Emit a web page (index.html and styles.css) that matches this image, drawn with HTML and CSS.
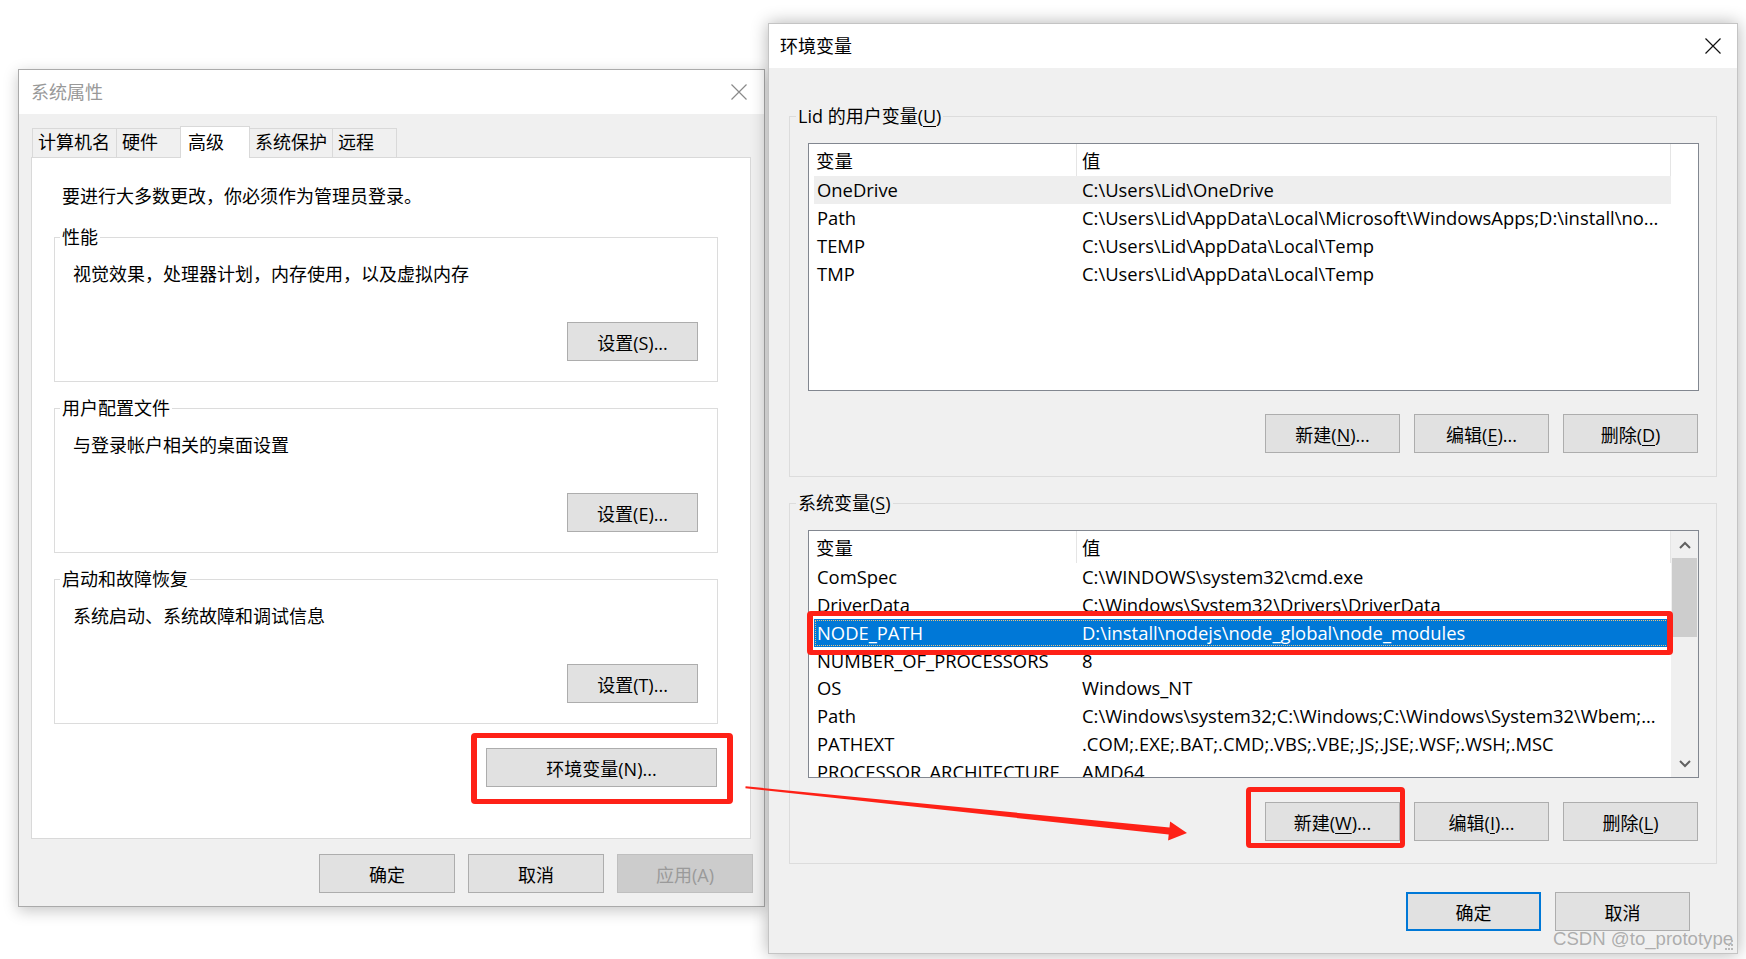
FILE: index.html
```html
<!DOCTYPE html>
<html lang="zh-CN">
  <head>
    <meta charset="UTF-8" />
    <title>系统属性 - 环境变量</title>
    <link rel="stylesheet" href="styles.css">
  </head>
  <body>
    <div class="desktop">

      <!-- Window: 系统属性 -->
      <div class="win win-sys">
        <div class="titlebar">
          <span class="title">系统属性</span>
          <svg class="close" viewBox="0 0 16 16"><path d="M0.5 0.5L15.5 15.5M15.5 0.5L0.5 15.5" stroke="#8a8a8a" stroke-width="1.2" fill="none"/></svg>
        </div>

        <div class="tabs">
          <div class="tab t1">计算机名</div>
          <div class="tab t2">硬件</div>
          <div class="tab t3 active">高级</div>
          <div class="tab t4">系统保护</div>
          <div class="tab t5">远程</div>
        </div>

        <div class="panel">
          <p class="intro">要进行大多数更改，你必须作为管理员登录。</p>

          <fieldset class="group">
            <legend>性能</legend>
            <p class="desc">视觉效果，处理器计划，内存使用，以及虚拟内存</p>
            <div class="group-actions"><button class="btn btn-set">设置(S)...</button></div>
          </fieldset>

          <fieldset class="group">
            <legend>用户配置文件</legend>
            <p class="desc">与登录帐户相关的桌面设置</p>
            <div class="group-actions"><button class="btn btn-set">设置(E)...</button></div>
          </fieldset>

          <fieldset class="group">
            <legend>启动和故障恢复</legend>
            <p class="desc">系统启动、系统故障和调试信息</p>
            <div class="group-actions"><button class="btn btn-set">设置(T)...</button></div>
          </fieldset>

          <div class="env-row"><button class="btn btn-env">环境变量(N)...</button></div>
        </div>

        <div class="dlg-buttons">
          <button class="btn">确定</button>
          <button class="btn">取消</button>
          <button class="btn" disabled>应用(A)</button>
        </div>
      </div>

      <!-- Window: 环境变量 -->
      <div class="win win-env">
        <div class="titlebar">
          <span class="title">环境变量</span>
          <svg class="close" viewBox="0 0 16 16"><path d="M0.5 0.5L15.5 15.5M15.5 0.5L0.5 15.5" stroke="#111" stroke-width="1.2" fill="none"/></svg>
        </div>

        <fieldset class="env-group">
          <legend>Lid 的用户变量(<u>U</u>)</legend>
          <div class="list">
            <div class="list-main">
              <div class="lv-head"><span class="h-name">变量</span><span class="h-val">值</span></div>
              <div class="lv-row hover"><span class="c-name">OneDrive</span><span class="c-val">C:\Users\Lid\OneDrive</span></div>
              <div class="lv-row"><span class="c-name">Path</span><span class="c-val">C:\Users\Lid\AppData\Local\Microsoft\WindowsApps;D:\install\no...</span></div>
              <div class="lv-row"><span class="c-name">TEMP</span><span class="c-val">C:\Users\Lid\AppData\Local\Temp</span></div>
              <div class="lv-row"><span class="c-name">TMP</span><span class="c-val">C:\Users\Lid\AppData\Local\Temp</span></div>
            </div>
            <div class="list-side"></div>
          </div>
          <div class="row-buttons">
            <button class="btn btn-sm">新建(<u>N</u>)...</button>
            <button class="btn btn-sm">编辑(<u>E</u>)...</button>
            <button class="btn btn-sm">删除(<u>D</u>)</button>
          </div>
        </fieldset>

        <fieldset class="env-group">
          <legend>系统变量(<u>S</u>)</legend>
          <div class="list">
            <div class="list-main">
              <div class="lv-head"><span class="h-name">变量</span><span class="h-val">值</span></div>
              <div class="lv-row"><span class="c-name">ComSpec</span><span class="c-val">C:\WINDOWS\system32\cmd.exe</span></div>
              <div class="lv-row"><span class="c-name">DriverData</span><span class="c-val">C:\Windows\System32\Drivers\DriverData</span></div>
              <div class="lv-row sel"><span class="c-name">NODE_PATH</span><span class="c-val">D:\install\nodejs\node_global\node_modules</span></div>
              <div class="lv-row"><span class="c-name">NUMBER_OF_PROCESSORS</span><span class="c-val">8</span></div>
              <div class="lv-row"><span class="c-name">OS</span><span class="c-val">Windows_NT</span></div>
              <div class="lv-row"><span class="c-name">Path</span><span class="c-val">C:\Windows\system32;C:\Windows;C:\Windows\System32\Wbem;...</span></div>
              <div class="lv-row"><span class="c-name">PATHEXT</span><span class="c-val">.COM;.EXE;.BAT;.CMD;.VBS;.VBE;.JS;.JSE;.WSF;.WSH;.MSC</span></div>
              <div class="lv-row"><span class="c-name">PROCESSOR_ARCHITECTURE</span><span class="c-val">AMD64</span></div>
            </div>
            <div class="list-side scrollbar">
              <div class="sb-btn"><svg viewBox="0 0 12 8"><polyline points="1,7 6,2 11,7" fill="none" stroke="#606060" stroke-width="2"/></svg></div>
              <div class="sb-thumb"></div>
              <div class="sb-track"></div>
              <div class="sb-btn sb-down"><svg viewBox="0 0 12 8"><polyline points="1,1 6,6 11,1" fill="none" stroke="#606060" stroke-width="2"/></svg></div>
            </div>
          </div>
          <div class="row-buttons">
            <button class="btn btn-sm">新建(<u>W</u>)...</button>
            <button class="btn btn-sm">编辑(<u>I</u>)...</button>
            <button class="btn btn-sm">删除(<u>L</u>)</button>
          </div>
        </fieldset>

        <div class="ok-row">
          <button class="btn btn-sm btn-default">确定</button>
          <button class="btn btn-sm">取消</button>
        </div>
      </div>

      <!-- annotations drawn on top of the screenshot -->
      <div class="mark mark-env"></div>
      <div class="mark mark-node"></div>
      <div class="mark mark-new"></div>
      <svg class="arrow" viewBox="0 0 1746 959">
        <polygon points="745.6,786.3 1169.5,827.6 1170.1,821.6 1187,833 1168.1,840.5 1168.7,834.6 745.4,788.3" fill="#fe2117"/>
      </svg>

      <div class="watermark">CSDN @to_prototype</div>
      <svg class="grip" viewBox="0 0 10 12">
        <rect x="7" y="1" width="2" height="2" fill="#b8b8b8"/>
        <rect x="4" y="5" width="2" height="2" fill="#b8b8b8"/>
        <rect x="7" y="5" width="2" height="2" fill="#b8b8b8"/>
        <rect x="1" y="9" width="2" height="2" fill="#b8b8b8"/>
        <rect x="4" y="9" width="2" height="2" fill="#b8b8b8"/>
        <rect x="7" y="9" width="2" height="2" fill="#b8b8b8"/>
      </svg>
    </div>
  </body>
</html>
```

FILE: styles.css
```css
* {
  box-sizing: border-box;
}
body {
  margin: 0;
  background: #fff;
  font-family: "Open Sans", "Noto Sans CJK SC", sans-serif;
  font-size: 18px;
  color: #000;
}
.desktop {
  position: relative;
  width: 1746px;
  height: 959px;
  overflow: hidden;
}

/* windows */
.win {
  position: absolute;
  display: flex;
  flex-direction: column;
  background: #f0f0f0;
}
.win-sys {
  left: 18px;
  top: 69px;
  width: 747px;
  height: 838px;
  border: 1px solid #aaaaaa;
  box-shadow: 0 4px 14px rgba(0, 0, 0, 0.22);
}
.win-env {
  left: 768px;
  top: 23px;
  width: 970px;
  height: 931px;
  border: 1px solid #c4c4c4;
  box-shadow: 0 0 16px rgba(0, 0, 0, 0.3);
}
.titlebar {
  flex: none;
  height: 44px;
  background: #fff;
  display: flex;
  align-items: center;
  justify-content: space-between;
}
.win-sys .titlebar {
  padding: 0 17px 0 12px;
}
.win-env .titlebar {
  padding: 0 16px 0 11px;
}
.title {
  line-height: 24px;
}
.win-sys .title {
  color: #999;
}
.close {
  width: 16px;
  height: 16px;
}

/* tabs */
.tabs {
  display: flex;
  align-items: flex-end;
  height: 31px;
  margin: 12px 0 0 13px;
}
.tab {
  height: 29px;
  line-height: 27px;
  padding-left: 5px;
  margin-right: -1px;
  border: 1px solid #d9d9d9;
  border-bottom: none;
  background: #f0f0f0;
  white-space: nowrap;
}
.t1 { width: 85px; }
.t2 { width: 65px; }
.t3 { width: 70px; }
.t4 { width: 84px; }
.t5 { width: 65px; }
.tab.active {
  position: relative;
  z-index: 1;
  height: 32px;
  margin-bottom: -1px;
  padding-left: 7px;
  line-height: 30px;
  background: #fff;
}

.panel {
  flex: none;
  height: 682px;
  margin: 0 13px 0 12px;
  background: #fff;
  border: 1px solid #d9d9d9;
  display: flex;
  flex-direction: column;
}
.intro {
  margin: 25px 0 0 30px;
  line-height: 26px;
}
.group {
  margin: 16px 32px 0 22px;
  padding: 0 0 20px;
  border: 1px solid #dcdcdc;
  min-width: 0;
}
.group + .group {
  margin-top: 14px;
}
.group legend,
.env-group legend {
  padding: 0 2px;
  line-height: 24px;
}
.group legend {
  margin-left: 5px;
}
.desc {
  margin: 12px 0 0 18px;
  line-height: 26px;
}
.group-actions {
  display: flex;
  justify-content: flex-end;
  margin: 35px 19px 0 0;
}
.env-row {
  display: flex;
  justify-content: flex-end;
  margin: 24px 33px 0 0;
}
.dlg-buttons {
  display: flex;
  justify-content: flex-end;
  gap: 13px;
  margin-top: 15px;
  padding-right: 11px;
}

/* buttons */
.btn {
  width: 136px;
  height: 39px;
  padding: 0;
  font: inherit;
  color: #000;
  background: #e1e1e1;
  border: 1px solid #adadad;
}
.btn u {
  text-decoration-thickness: 1px;
  text-underline-offset: 3px;
}
.btn-set {
  width: 131px;
}
.btn-env {
  width: 231px;
}
.btn-sm {
  width: 135px;
}
.btn:disabled {
  background: #cccccc;
  border-color: #bfbfbf;
  color: #9a9a9a;
}
.btn-default {
  border: 2px solid #0078d7;
}

/* environment dialog */
.env-group {
  margin: 36px 20px 0;
  padding: 0 0 23px;
  border: 1px solid #dcdcdc;
  min-width: 0;
}
.env-group + .env-group {
  margin-top: 14px;
  padding-bottom: 22px;
}
.env-group legend {
  margin-left: 6px;
}
.env-group legend u {
  text-underline-offset: 3px;
}
.list {
  height: 248px;
  margin: 15px 17px 0 18px;
  background: #fff;
  border: 1px solid #828790;
  display: flex;
  font-size: 18.4px;
}
.list-main {
  width: 862px;
  flex: none;
  overflow: hidden;
}
.list-side {
  flex: 1;
}
.lv-head {
  display: flex;
  height: 32px;
}
.lv-head span {
  padding-top: 2px;
  line-height: 30px;
  border-right: 1px solid #e5e5e5;
}
.h-name {
  width: 268px;
  padding-left: 7px;
}
.h-val {
  width: 594px;
  padding-left: 5px;
}
.lv-row {
  display: flex;
  width: 857px;
  height: 27.85px;
  margin-left: 5px;
  padding-top: 1px;
  line-height: 26.85px;
  white-space: nowrap;
}
.c-name {
  flex: none;
  width: 268px;
  padding-left: 3px;
}
.lv-row.hover {
  background: #eeeeee;
}
.lv-row.sel {
  background: #0078d7;
  color: #fff;
  outline: 1px dotted #e9c27c;
  outline-offset: -2px;
}
.row-buttons {
  display: flex;
  justify-content: flex-end;
  gap: 14px;
  margin: 23px 18px 0 0;
}
.env-group + .env-group .row-buttons {
  margin-top: 24px;
}
.ok-row {
  display: flex;
  justify-content: flex-end;
  gap: 14px;
  margin-top: 28px;
  padding-right: 47px;
}

/* scrollbar */
.scrollbar {
  background: #f0f0f0;
  display: flex;
  flex-direction: column;
}
.sb-btn {
  height: 27px;
  display: flex;
  align-items: center;
  justify-content: center;
}
.sb-btn svg {
  width: 12px;
  height: 8px;
}
.sb-down {
  height: 26px;
}
.sb-thumb {
  height: 79px;
  margin: 0 1px;
  background: #cdcdcd;
}
.sb-track {
  flex: 1;
}

/* red annotations */
.mark {
  position: absolute;
  border: 5px solid #fe2117;
  border-radius: 4px;
}
.mark-env {
  left: 471px;
  top: 733px;
  width: 262px;
  height: 71px;
  border-width: 5px 6px;
}
.mark-node {
  left: 807px;
  top: 611px;
  width: 866px;
  height: 44px;
  border-width: 5px 6px;
}
.mark-new {
  left: 1246px;
  top: 787px;
  width: 159px;
  height: 61px;
}
.arrow {
  position: absolute;
  left: 0;
  top: 0;
  width: 1746px;
  height: 959px;
  pointer-events: none;
}
.watermark {
  position: absolute;
  left: 1553px;
  top: 927px;
  font-family: "Liberation Sans", Arial, sans-serif;
  font-size: 18.6px;
  line-height: 24px;
  color: rgba(130, 130, 130, 0.62);
}
.grip {
  position: absolute;
  left: 1724px;
  top: 939px;
  width: 10px;
  height: 12px;
}
```
